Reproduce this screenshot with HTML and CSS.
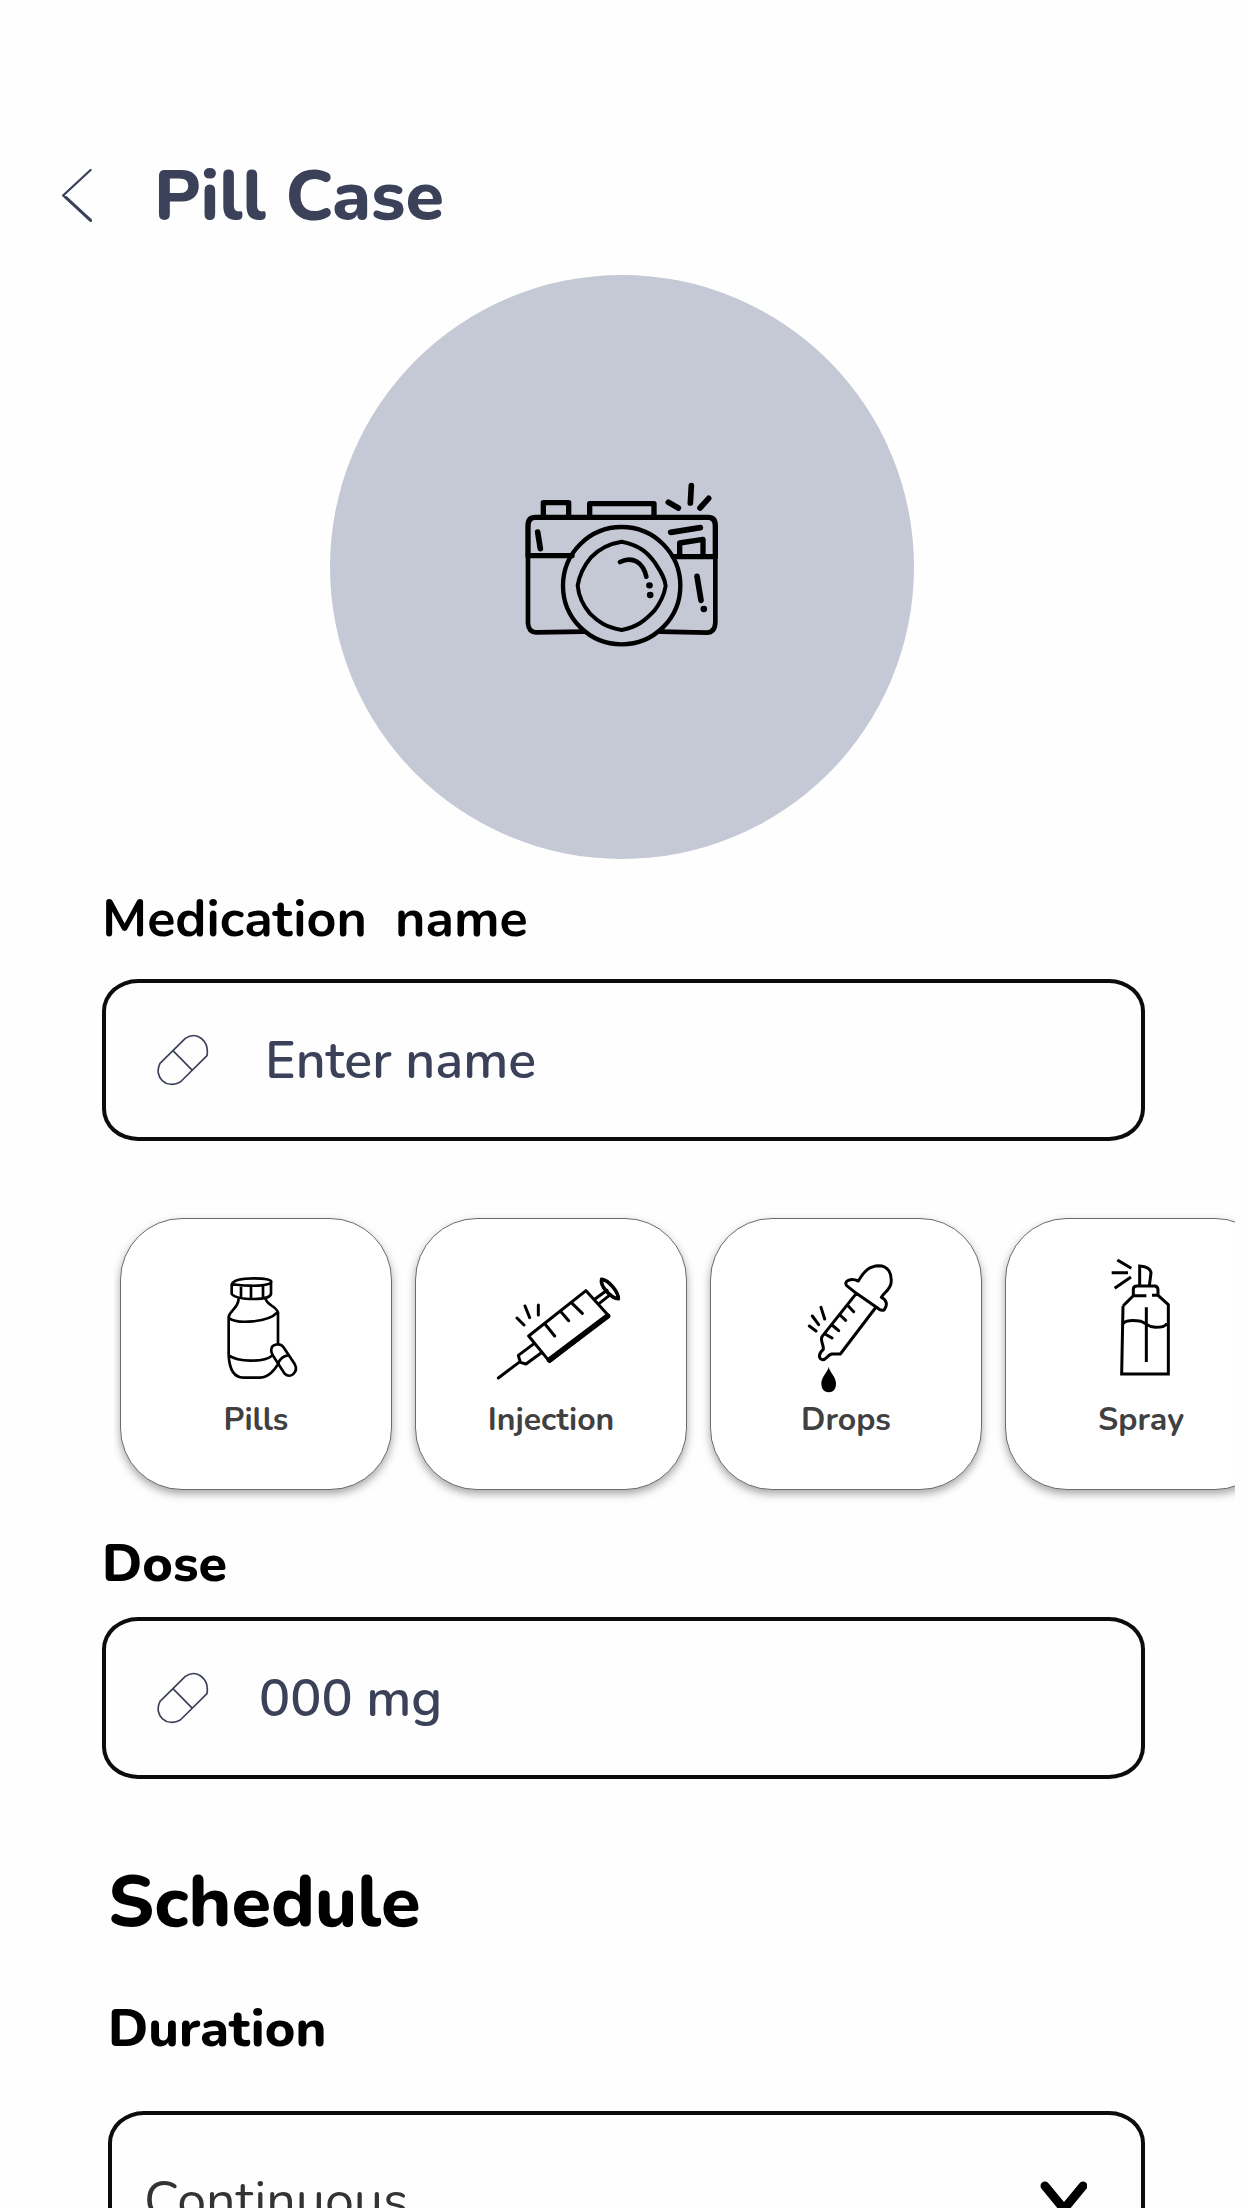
FILE: index.html
```html
<!DOCTYPE html>
<html lang="en">
	<head>
		<meta charset="utf-8" />
		<meta name="viewport" content="width=device-width, initial-scale=1" />
		<title>Pill Case</title>
		<link rel="stylesheet" href="styles.css">
	</head>
	<body>
		<div class="screen">
			<header class="topbar">
				<button class="back" type="button" aria-label="Back">
					<svg viewBox="90 108 105 175" width="35" height="58"><path d="M182 117L99 194L182 269" stroke-width="7" /><path d="M108 200L182 269" stroke-width="9" /></svg>
				</button>
				<h1>Pill Case</h1>
			</header>

			<form class="form">
				<button class="photo" type="button" aria-label="Add photo">
					<svg viewBox="4 9 720 630" width="240" height="210">
						<path d="M214 290H82V200Q82 175 104 175H622Q644 175 644 200V293H518" stroke-width="16" />
						<path d="M82 285V494Q84 520 106 520L250 518M644 290V490Q643 520 618 521L478 518" stroke-width="14" />
						<path d="M128 172V131H204V172M267 172V134H460V172M537 290V252L607 241V290" stroke-width="16" />
						<ellipse cx="363" cy="380" rx="176" ry="176" stroke-width="13" />
						<path d="M363 248C415 258 440 280 462 310C482 340 494 360 495 381C491 405 482 428 461 455C435 483 410 504 363 513C315 504 292 488 268 464C244 436 234 410 231 380C235 354 246 325 270 296C297 266 325 254 363 248Z" stroke-width="12" />
						<path d="M358 309C395 290 427 310 437 353" stroke-width="14" />
						<path d="M111 219L119 269M510 220L599 206M589 352L601 424M503 130L533 147M572 80L569 132M624 118L598 147" stroke-width="17" />
						<path d="M446 379h1M448 408h1M609 450h1" stroke-width="19" />
					</svg>
				</button>

				<label class="label name" for="name">Medication  name</label>
				<div class="field">
					<svg class="capsule" viewBox="230 490 156 156" width="52" height="52"><path d="M239 578L315 503C350 480 387 510 380 555L300 634C260 657 218 620 239 578ZM280 542L334 597" /></svg>
					<input id="name" type="text" placeholder="Enter name" />
				</div>

				<div class="types">
					<button class="type" type="button">
						<svg viewBox="63 57 810 540">
							<path d="M395 254C400 238 430 235 462 235C495 235 514 239 514 246C510 254 480 258 449 257C420 257 395 251 395 254V282C405 294 435 297 463 297C490 297 510 292 513 282V246M423 258V292M453 258V296M489 256V294" />
							<path d="M416 295C415 325 390 331 386 350V466C388 505 400 532 430 533H480C510 531 526 505 536 490M496 294C500 316 527 317 534 337V432M386 353C410 374 505 367 532 337M386 466C415 486 490 488 516 467" />
							<path d="M514 447C516 432 540 428 550 441L584 492C596 515 573 538 554 521L523 473Q512 459 514 447ZM535 488Q545 469 563 466" />
						</svg>
						<span>Pills</span>
					</button>
					<button class="type" type="button">
						<svg viewBox="47 57 810 540">
							<path d="M385 408L557 272L625 347L448 485ZM434 372L463 408M483 337L505 362M513 308L546 340M583 298L620 271M596 311L630 284M401 431L354 466L360 487L377 492L421 460M356 487L294 534M350 354L371 375M374 318L388 353M414 315V345" stroke-width="9" />
							<path d="M447 480L622 348" stroke-width="16" />
							<path d="M604 238C625 240 654 275 654 296C635 296 598 260 604 238Z" stroke-width="11" />
						</svg>
						<span>Injection</span>
					</button>
					<button class="type" type="button">
						<svg viewBox="63 57 810 540">
							<path d="M499 280L470 257C460 243 482 233 505 243C524 210 540 198 566 197C594 197 607 220 603 250C599 270 584 276 574 292C591 299 593 316 583 329Q577 333 568 328L499 280L396 410C390 425 401 430 400 448C385 461 385 475 397 479C411 479 410 466 425 462H451L556 324M474 317L491 335M450 345L467 361M426 375L446 392M405 402L426 414M358 378L378 393M367 348L386 374M393 322L404 357" stroke-width="9" />
							<path d="M416 500C418 515 438 530 438 550C438 568 430 577 416 577C401 577 394 566 394 550C394 530 414 515 416 500Z" class="solid" />
						</svg>
						<span>Drops</span>
					</button>
					<button class="type" type="button">
						<svg viewBox="77 57 810 540">
							<path class="square" d="M428 318L424 522H564V314L533 286H515M428 318L459 287H498M459 286V267Q459 258 470 258H525Q533 261 533 270V286M478 257V198Q510 200 512 219L507 257M498 322V486M429 370C440 359 470 362 482 364C500 370 500 381 525 382C545 382 555 380 560 370M411 180L453 205M394 218H443M403 265L452 231" stroke-width="9" />
						</svg>
						<span>Spray</span>
					</button>
				</div>

				<label class="label" for="dose">Dose</label>
				<div class="field dose">
					<svg class="capsule" viewBox="230 490 156 156" width="52" height="52"><path d="M239 578L315 503C350 480 387 510 380 555L300 634C260 657 218 620 239 578ZM280 542L334 597" /></svg>
					<input id="dose" type="text" placeholder="000 mg" />
				</div>

				<section class="schedule">
					<h2>Schedule</h2>
					<label class="label" for="duration">Duration</label>
					<div class="field">
						<select id="duration">
							<option>Continuous</option>
						</select>
						<svg class="chevron" viewBox="0 0 48 36" width="48" height="36"><path d="M6 6L25 29L44 6" /></svg>
					</div>
				</section>
			</form>
		</div>
	</body>
</html>
```
FILE: styles.css
```css
* {
	box-sizing: border-box;
}
html, body {
	height: 100%;
}
body {
	margin: 0;
	background: #fefefe;
	color: #000;
	font-family: Nunito, Lato, sans-serif;
}
h1, h2 {
	margin: 0;
	font-size: 72px;
	line-height: 88px;
	font-weight: 800;
}
button {
	padding: 0;
	border: 0;
	background: none;
	font-family: inherit;
}
svg {
	display: block;
	flex: none;
	fill: none;
	stroke: #000;
	stroke-linecap: round;
	stroke-linejoin: round;
}

/* the whole screen scrolls, without a visible bar */
.screen {
	height: 100%;
	overflow: hidden auto;
	scrollbar-width: none;
}

.topbar {
	display: flex;
	align-items: center;
	gap: 59px;
	padding: 152px 60px 35px;
}
.topbar h1 {
	color: #3b4158;
	font-size: 70px;
}
.back svg {
	stroke: #3b4158;
}

.form {
	display: flex;
	flex-direction: column;
	padding: 0 97px 80px 102px;
}
.photo {
	display: flex;
	align-items: center;
	justify-content: center;
	align-self: center;
	width: 584px;
	height: 584px;
	margin: 0 4px 28px 0;
	border-radius: 50%;
	background: #c5c9d5;
}

.label {
	font-size: 52px;
	line-height: 64px;
	font-weight: 800;
	white-space: pre;
}
.name {
	font-weight: 700;
}
.field {
	position: relative;
	display: flex;
	align-items: center;
	gap: 56px;
	height: 162px;
	margin-top: 28px;
	padding: 0 51px;
	border: 4px solid #0c0c0c;
	border-radius: 36px / 32px;
}
.field input,
.field select {
	flex: 1;
	min-width: 0;
	height: 100%;
	padding: 0;
	border: 0;
	outline: 0;
	background: none;
	color: #3b4158;
	font-family: inherit;
	font-size: 52px;
	font-weight: 600;
}
.field input::placeholder {
	color: #3b4158;
	opacity: 1;
}
.capsule {
	stroke: #3b4158;
	stroke-width: 5;
}

/* medication types, runs off the right edge */
.types {
	display: flex;
	gap: 23px;
	margin: 57px -90px 22px 12px;
	padding: 20px 0 20px 6px;
	overflow: auto hidden;
	scrollbar-width: none;
}
.type {
	flex: none;
	width: 272px;
	height: 272px;
	border: 1px solid #6c6c6c;
	border-radius: 62px;
	background: #fff;
	box-shadow: 0 4px 9px rgba(0, 0, 0, 0.34);
}
.type svg {
	width: 270px;
	height: 180px;
	stroke-width: 8;
}
.type span {
	display: block;
	height: 90px;
	padding-top: 1px;
	color: #404040;
	font-size: 32px;
	line-height: 40px;
	font-weight: 700;
}
.square {
	stroke-linecap: butt;
	stroke-linejoin: miter;
}
.solid {
	fill: #000;
	stroke: none;
}

.dose {
	gap: 50px;
	margin-top: 21px;
}

.schedule {
	display: flex;
	flex-direction: column;
	margin-top: 79px;
	padding-left: 6px;
}
.schedule h2 {
	margin-bottom: 51px;
}
.schedule .field {
	margin-top: 50px;
	padding: 0 54px 0 32px;
}
.field select {
	padding-top: 16px;
	appearance: none;
	color: #333;
	font-weight: 400;
}
.chevron {
	position: absolute;
	right: 54px;
	top: 65px;
	stroke-width: 9;
	pointer-events: none;
}
```
